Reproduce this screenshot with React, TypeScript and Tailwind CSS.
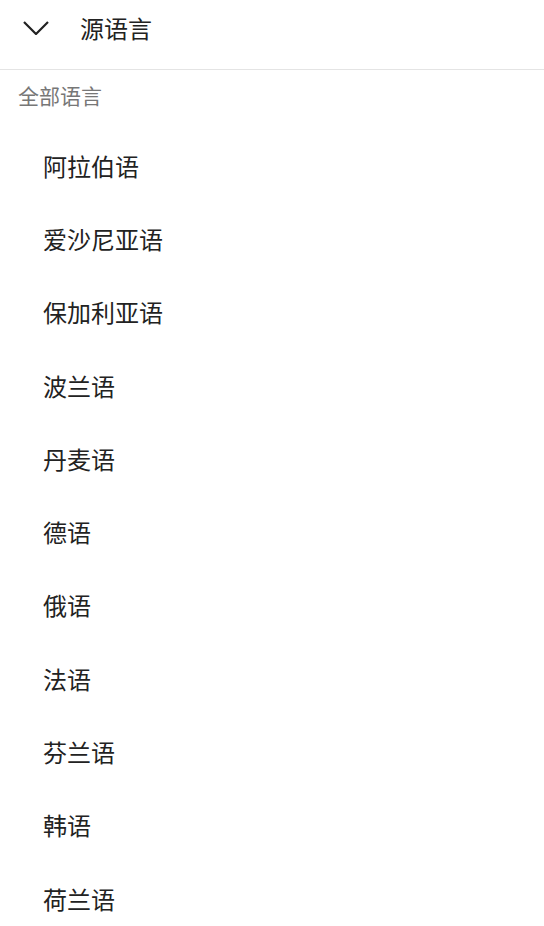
import React from 'react';

const languages = [
  '阿拉伯语',
  '爱沙尼亚语',
  '保加利亚语',
  '波兰语',
  '丹麦语',
  '德语',
  '俄语',
  '法语',
  '芬兰语',
  '韩语',
  '荷兰语',
];

const font = { fontFamily: '"Noto Sans CJK SC", "Noto Sans", sans-serif' };

const App = () => {
  return (
    <div className="min-h-screen bg-white overflow-hidden" style={font}>
      {/* header */}
      <div className="h-[70px] border-b border-[#e4e4e4]">
        <div className="h-[55px] flex items-center">
          <div className="w-[80px] pl-[23px]">
            <svg width="26" height="14" viewBox="0 0 26 14" fill="none">
              <polyline points="1,1 13,13 25,1" stroke="#222" strokeWidth="2.2" />
            </svg>
          </div>
          <span className="text-[24px] text-[#222]">源语言</span>
        </div>
      </div>

      <div className="h-[52px] flex items-center pl-[18px] text-[21px] text-[#777]">全部语言</div>

      <ul className="pt-[7px]">
        {languages.map((lang) => (
          <li key={lang} className="h-[73.3px] flex items-center pl-[43px] text-[24px] text-[#222]">
            {lang}
          </li>
        ))}
      </ul>
    </div>
  );
};

export default App;
